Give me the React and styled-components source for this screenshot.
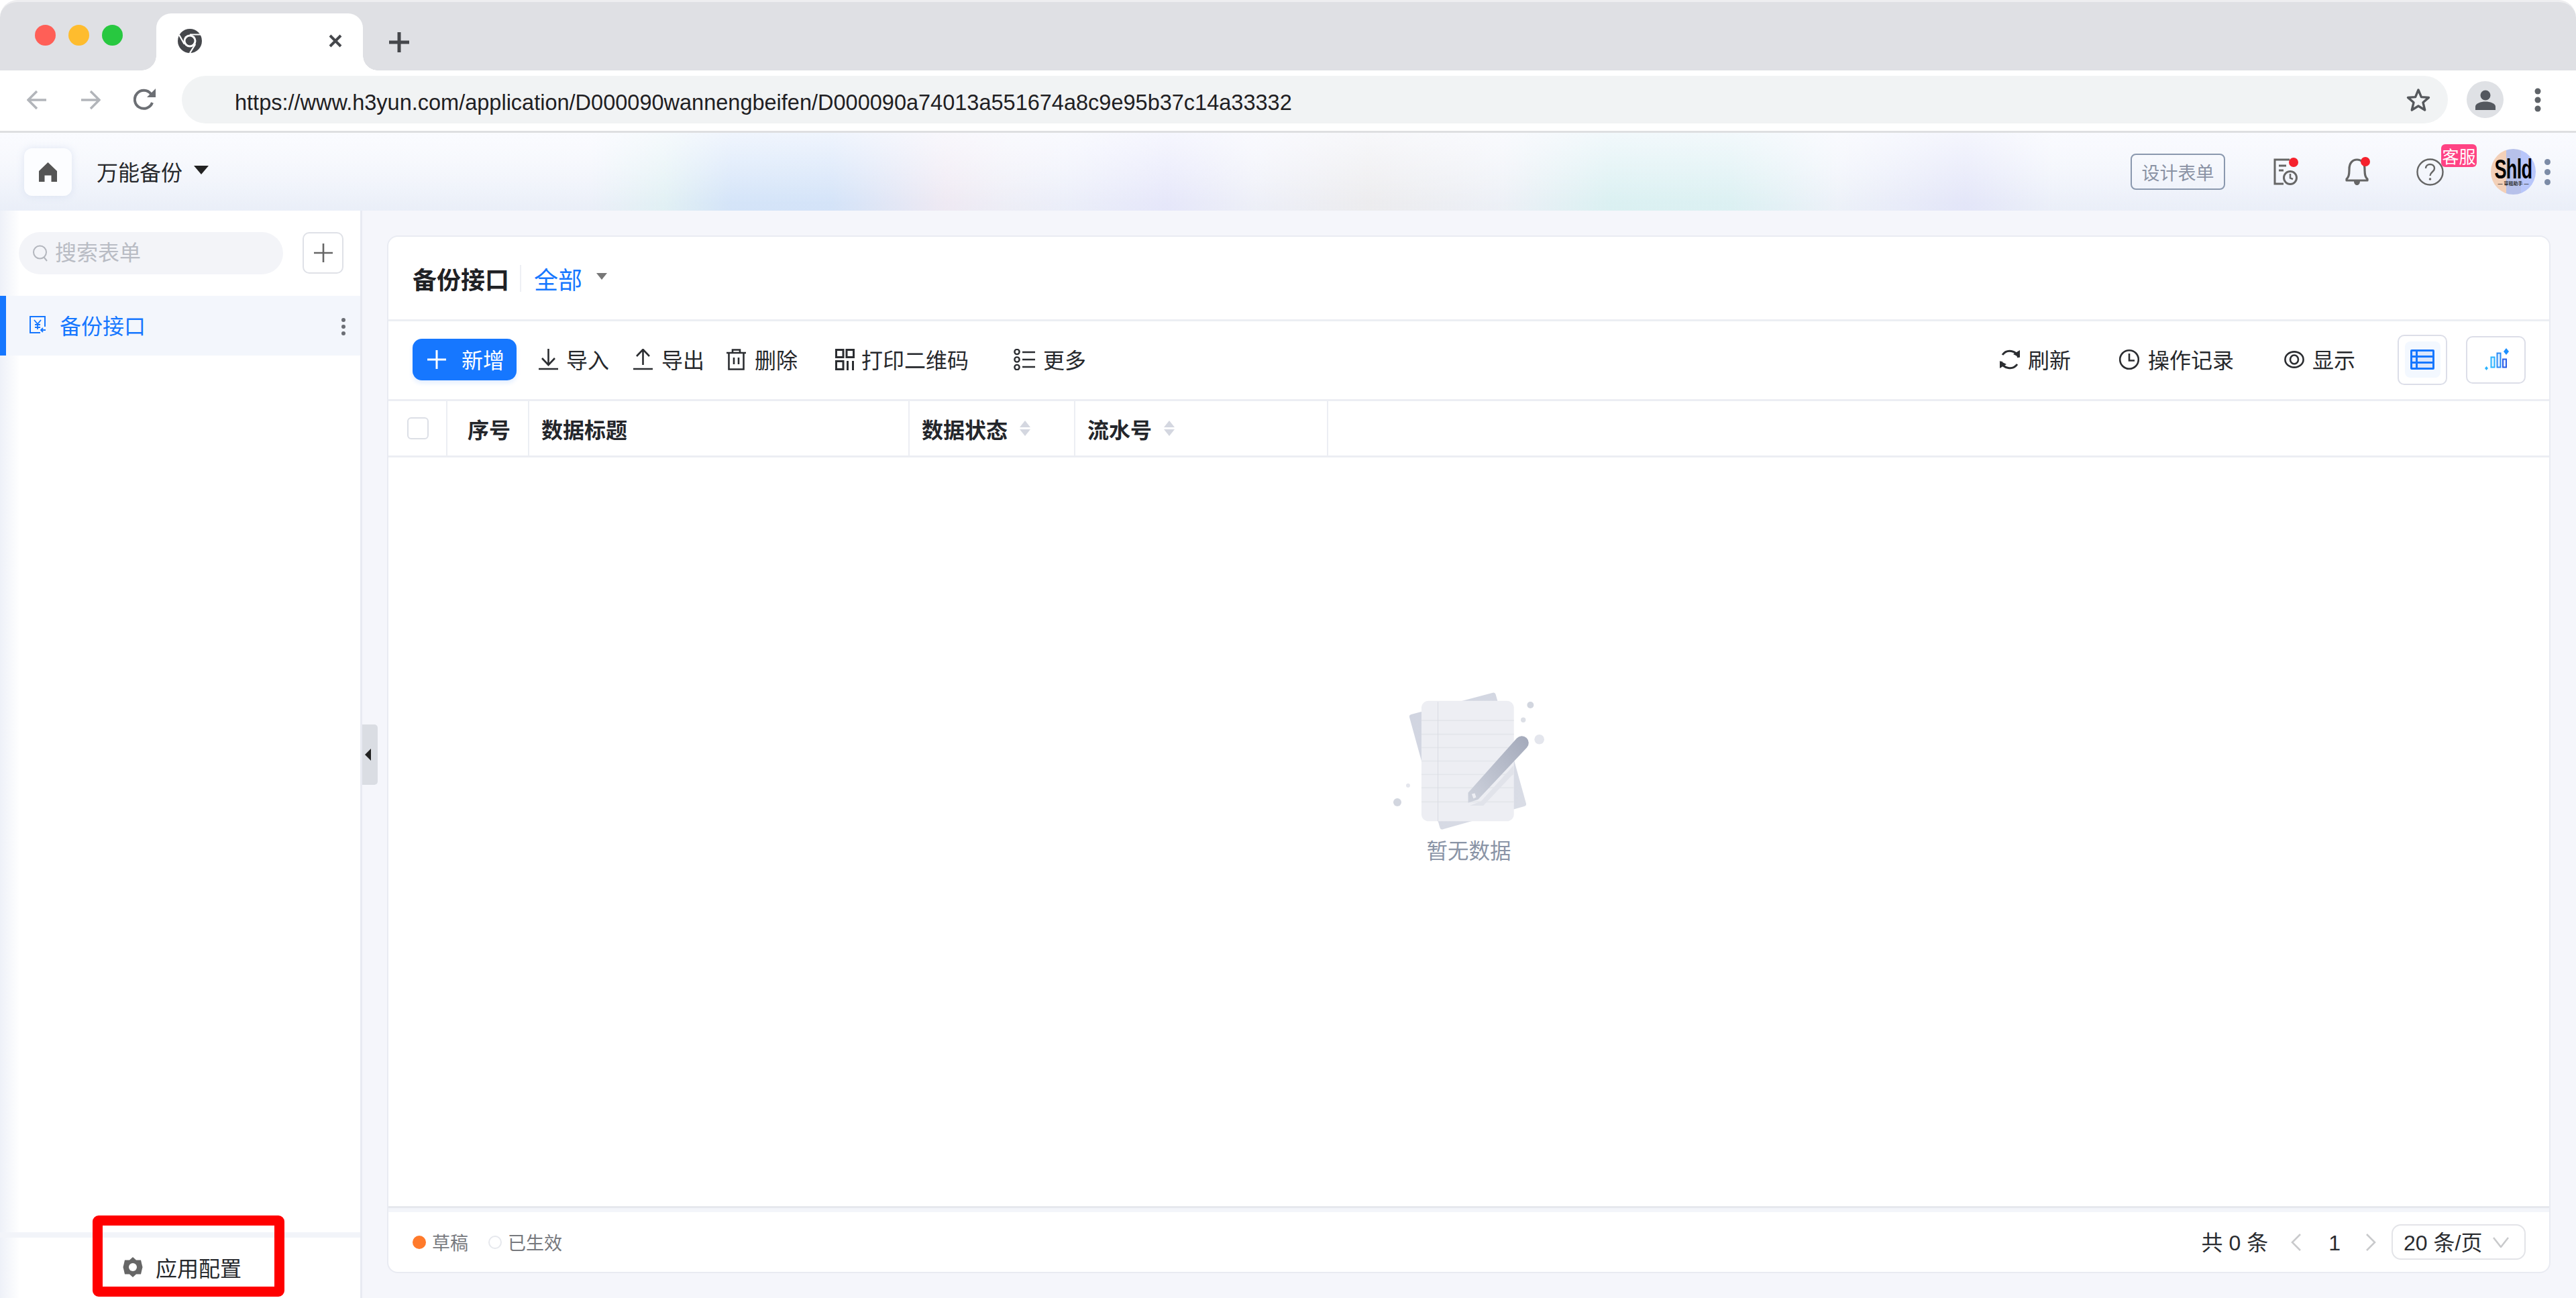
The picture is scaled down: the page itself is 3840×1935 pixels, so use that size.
import React from 'react';
import styled, { createGlobalStyle } from 'styled-components';

const Global = createGlobalStyle`
  html, body { margin: 0; padding: 0; background: #fff; }
  * { box-sizing: border-box; }
  body { font-family: "Liberation Sans", "Noto Sans CJK SC", sans-serif; color: #24262b; }
`;

const Win = styled.div`
  position: relative; width: 3840px; height: 1935px; overflow: hidden;
  display: flex; flex-direction: column; background: #fff;
`;
const TabStrip = styled.div`
  height: 105px; flex: none; background: #dfe0e4; border-top: 3px solid #eeeef0;
  border-radius: 26px 26px 0 0; display: flex; align-items: flex-end; padding-left: 233px;
`;
const Lights = styled.div`
  position: absolute; left: 52px; top: 37px; display: flex; gap: 19px;
`;
const Light = styled.span`
  width: 31px; height: 31px; border-radius: 50%; background: ${p => p.$c};
`;
const Tab = styled.div`
  position: relative; width: 308px; height: 85px; background: #fff; border-radius: 22px 22px 0 0;
  display: flex; align-items: center; justify-content: space-between; padding: 0 31px 4px 32px;
  &::before, &::after {
    content: ""; position: absolute; bottom: 0; width: 22px; height: 22px;
  }
  &::before { left: -22px; background: radial-gradient(circle at 0 0, transparent 21.5px, #fff 22px); }
  &::after { right: -22px; background: radial-gradient(circle at 100% 0, transparent 21.5px, #fff 22px); }
`;
const NewTab = styled.div`
  margin: 0 0 27px 39px; display: flex;
`;
const BrowserBar = styled.div`
  height: 93px; flex: none; background: #fff; border-bottom: 3px solid #dedfe1;
  display: flex; align-items: center; padding: 0 0 3px 40px;
`;
const NavIcon = styled.span`
  display: flex; margin-right: ${p => p.$mr}px;
`;
const Address = styled.div`
  width: 3378px; height: 71px; background: #f1f3f4; border-radius: 36px; margin-left: 38px;
  display: flex; align-items: center; justify-content: space-between; padding: 0 26px 0 79px;
`;
const Url = styled.span`
  font-size: 32.5px; color: #1f2023; white-space: nowrap; padding-top: 9px;
`;
const Person = styled.span`
  width: 55px; height: 55px; border-radius: 50%; background: #dfe1e5; margin-left: 28px;
  display: flex; align-items: center; justify-content: center; overflow: hidden;
`;
const ChromeDots = styled.span`
  margin-left: 46px; display: flex;
`;
const AppHeader = styled.header`
  height: 116px; flex: none; position: relative; display: flex; align-items: center; padding-left: 36px;
  background:
    linear-gradient(180deg, rgba(250,251,255,.72) 0%, rgba(250,251,255,.05) 90%),
    linear-gradient(90deg, rgba(255,255,255,0) 880px, rgba(214,240,238,.5) 990px, rgba(204,224,248,.8) 1090px, rgba(206,224,248,.85) 1240px, rgba(240,228,238,.6) 1410px, rgba(240,234,242,.4) 1500px, rgba(234,234,250,.3) 1590px, rgba(226,226,250,.7) 1740px, rgba(240,238,246,.4) 1870px, rgba(236,234,234,.75) 2040px, rgba(238,240,242,.4) 2240px, rgba(214,240,240,.85) 2400px, rgba(214,240,240,.8) 2580px, rgba(240,244,248,.3) 2740px, rgba(224,226,248,.8) 2930px, rgba(236,238,250,.15) 3060px),
    linear-gradient(180deg, #fafbfe 0%, #e9eef8 100%);
`;
const HomeBtn = styled.div`
  width: 71px; height: 71px; border-radius: 12px; background: #fcfdff;
  box-shadow: 0 0 12px rgba(170,185,220,.3); display: flex; align-items: center; justify-content: center;
`;
const AppName = styled.span`
  margin-left: 37px; font-size: 32px; color: #26282c; line-height: 1; padding-top: 3px;
`;
const Caret = styled.span`
  width: 0; height: 0; border-left: ${p => p.$w}px solid transparent; border-right: ${p => p.$w}px solid transparent;
  border-top: ${p => p.$h}px solid ${p => p.$c};
`;
const NameCaret = styled(Caret)` margin: 0 0 5px 17px; `;
const HeaderRight = styled.div`
  margin-left: auto; display: flex; align-items: center; padding-right: 38px;
`;
const DesignBtn = styled.div`
  width: 141px; height: 54px; border: 2px solid #8a98ae; border-radius: 8px;
  display: flex; align-items: center; justify-content: center; font-size: 27px; color: #8a92a4;
  margin: 0 72px 0 0;
`;
const HeadIcon = styled.span`
  position: relative; display: flex; margin-left: ${p => p.$ml}px;
`;
const RedDot = styled.i`
  position: absolute; right: ${p => p.$r}px; top: ${p => p.$t}px; width: 14px; height: 14px; border-radius: 50%; background: #f5222d;
`;
const Badge = styled.span`
  position: absolute; left: 37px; top: -21px; width: 53px; height: 34px; border-radius: 6px; background: #ff4384;
  color: #fff; font-size: 25px; display: flex; align-items: center; justify-content: center; white-space: nowrap;
`;
const Avatar = styled.div`
  width: 67px; height: 68px; margin-left: 70px; border-radius: 50%; overflow: hidden; flex: none;
  background: linear-gradient(90deg, #f3d0b8 0 34%, #b7c1ea 34% 67%, #b8c6fa 67%);
  display: flex; flex-direction: column; align-items: center; justify-content: center;
`;
const AvatarName = styled.span`
  font-size: 41px; line-height: 36px; font-weight: 700; color: #000; transform: scaleX(.66); letter-spacing: -1px;
`;
const AvatarSub = styled.span`
  font-size: 7px; line-height: 8px; color: #333; white-space: nowrap; font-weight: 700;
`;
const VDots = styled.span`
  display: flex; flex-direction: column; gap: 6px; margin-left: 13px;
`;
const VDot = styled.i`
  width: ${p => p.$s}px; height: ${p => p.$s}px; border-radius: 50%; background: ${p => p.$c};
`;
const BodyRow = styled.div`
  flex: 1; display: flex; min-height: 0; background: #f5f6fb; position: relative;
`;
const Sidebar = styled.aside`
  width: 540px; flex: none; background: linear-gradient(90deg, #eef1f8 0, #fff 30px); border-right: 3px solid #e8eaf2;
  display: flex; flex-direction: column; position: relative;
`;
const SearchRow = styled.div`
  display: flex; padding: 32px 0 0 28px; height: 127px; flex: none; align-items: flex-start;
`;
const Search = styled.div`
  width: 394px; height: 63px; border-radius: 32px; background: #f3f4f8; display: flex; align-items: center;
  padding-left: 21px; gap: 11px; font-size: 32px; color: #b9bcc4; line-height: 1; padding-bottom: 1px;
`;
const AddBtn = styled.div`
  width: 61px; height: 62px; margin-left: 29px; border: 2px solid #dfe1e7; border-radius: 10px; background: #fff;
  display: flex; align-items: center; justify-content: center;
`;
const NavItem = styled.div`
  height: 89px; flex: none; background: #f3f6fc; border-left: 9px solid #1677ff; display: flex; align-items: center;
  padding: 0 0 3px 34px; gap: 20px; font-size: 32px; color: #1677ff; position: relative;
`;
const ItemDots = styled.span`
  position: absolute; right: 22px; top: 33px; display: flex; flex-direction: column; gap: 4px;
`;
const SideSpacer = styled.div` flex: 1; `;
const SideLine = styled.div` height: 8px; flex: none; background: #f2f4f9; `;
const Config = styled.div`
  height: 90px; flex: none; display: flex; align-items: center; padding: 0 0 2px 183px; gap: 19px; font-size: 32px; color: #26282c;
`;
const Marker = styled.div`
  position: absolute; left: 138px; top: 1812px; width: 286px; height: 121px; border: 15px solid #f00; border-radius: 9px; pointer-events: none;
`;
const Collapse = styled.div`
  position: absolute; left: 540px; top: 766px; width: 23px; height: 90px; background: #dadde3; border-radius: 0 5px 5px 0;
  display: flex; align-items: center; justify-content: flex-start; padding-left: 4px;
`;
const CollapseArrow = styled.i`
  width: 0; height: 0; border-top: 9px solid transparent; border-bottom: 9px solid transparent; border-right: 9px solid #222;
`;
const Main = styled.main`
  flex: 1; padding: 37px 38px 37px 37px; display: flex; min-width: 0;
`;
const Card = styled.section`
  flex: 1; background: #fff; border: 2px solid #e9ebf2; border-radius: 16px; display: flex; flex-direction: column; overflow: hidden;
`;
const TitleRow = styled.div`
  height: 126px; flex: none; border-bottom: 3px solid #eceef3; display: flex; align-items: center; padding-left: 36px;
`;
const Title = styled.h1`
  margin: 0; font-size: 36px; font-weight: 700; color: #1f2125; line-height: 1; width: 162px;
  border-right: 2px solid #eef0f4; padding: 8px 0 0; height: 40px; display: flex; align-items: center; white-space: nowrap;
`;
const Scope = styled.span`
  font-size: 36px; line-height: 1; color: #1677ff; margin-left: 19px; padding-top: 8px;
`;
const ScopeCaret = styled(Caret)` margin: 0 0 6px 21px; `;
const ToolRow = styled.div`
  height: 119px; flex: none; border-bottom: 3px solid #eceef3; display: flex; align-items: center; padding: 0 35px 2px 36px;
`;
const Primary = styled.div`
  width: 155px; height: 62px; border-radius: 14px; background: #1677ff; color: #fff; font-size: 32px; line-height: 1;
  display: flex; align-items: center; padding-left: 22px; gap: 23px; box-shadow: 0 4px 6px rgba(22,119,255,.12); flex: none;
`;
const Label = styled.span` padding-top: 3px; `;
const ThLabel = styled.span` padding-top: 6px; `;
const Tool = styled.div`
  display: flex; align-items: center; gap: ${p => p.$gap || 13}px; font-size: 32px; line-height: 1; color: #26282c;
  margin-left: ${p => p.$ml}px; white-space: nowrap; flex: none;
`;
const ToolRight = styled.div` margin-left: auto; display: flex; align-items: center; `;
const ViewBtn = styled.div`
  width: ${p => p.$w}px; height: ${p => p.$h}px; margin-left: ${p => p.$ml}px; border: 2px solid #dcdee8; border-radius: 10px; flex: none;
  display: flex; align-items: center; justify-content: center; background: #fff;
`;
const ViewInner = styled.span`
  width: 53px; height: 54px; border-radius: 8px; background: #f3f8ff; display: flex; align-items: center; justify-content: center;
`;
const THead = styled.div`
  height: 84px; flex: none; border-bottom: 3px solid #eceef3; display: grid;
  grid-template-columns: 88px 122px 567px 247px 377px; padding-bottom: 0;
`;
const Th = styled.div`
  border-right: 2px solid #eceef3; display: flex; align-items: center; padding-left: ${p => p.$pl}px; gap: ${p => p.$gap || 0}px;
  font-size: 32px; font-weight: 700; color: #24262b; line-height: 1; white-space: nowrap;
`;
const Check = styled.span`
  width: 32px; height: 33px; border: 2px solid #dcdfe6; border-radius: 6px; background: #fff;
`;
const Sort = styled.span` display: flex; flex-direction: column; gap: 3px; `;
const SortUp = styled.i`
  width: 0; height: 0; border-left: 8px solid transparent; border-right: 8px solid transparent; border-bottom: 10px solid #d4d7e0;
`;
const SortDown = styled(SortUp)` transform: rotate(180deg); `;
const TBody = styled.div`
  flex: 1; display: flex; flex-direction: column; align-items: center; padding-top: 346px; min-height: 0;
`;
const EmptyArt = styled.svg` display: block; flex: none; `;
const EmptyText = styled.div`
  margin-top: 9px; font-size: 31.5px; line-height: 38px; color: #8a94a6;
`;
const Foot = styled.div`
  height: 98px; flex: none; border-top: 9px solid #f3f5fa; position: relative; display: flex; align-items: center; padding: 0 35px 0 36px;
  &::before { content: ""; position: absolute; left: 0; right: 0; top: -9px; height: 3px; background: #e6e8ed; }
`;
const Legend = styled.span`
  display: flex; align-items: center; gap: 9px; font-size: 27px; color: #77797e; margin-right: 30px; line-height: 1;
`;
const LegendText = styled.span` padding-top: 5px; `;
const LDot = styled.i`
  width: 20px; height: 20px; border-radius: 50%; background: ${p => p.$on ? '#ff7a2b' : '#fff'};
  border: ${p => p.$on ? 'none' : '2px solid #e6e8ed'};
`;
const Pager = styled.div`
  margin-left: auto; display: flex; align-items: center; font-size: 32px; color: #2a2c30; line-height: 1;
`;
const Total = styled.span` margin-right: 34px; padding-top: 3px; `;
const PageNum = styled.span` margin: 0 38px 0 41px; padding-top: 3px; `;
const SizeSel = styled.div`
  width: 200px; height: 53px; margin-left: 23px; border: 2px solid #e3e4e8; border-radius: 14px;
  display: flex; align-items: center; padding-left: 16px; gap: 16px; white-space: nowrap;
`;

const I = ({ w, h, vb, children, ...r }) => (
  <svg width={w} height={h} viewBox={vb || `0 0 ${w} ${h}`} fill="none" {...r}>{children}</svg>
);

const ChromeLogo = () => (
  <I w={36} h={36} vb="0 0 36 36">
    <circle cx="18" cy="18" r="18" fill="#45474b" />
    <circle cx="18" cy="18" r="9.5" fill="#fff" />
    <circle cx="18" cy="18" r="6.5" fill="#45474b" />
    <path d="M18 8.5H34M9.8 22.8L2 9M26.2 22.8L18 36" stroke="#fff" strokeWidth="2.2" />
  </I>
);

export default function App() {
  const arrow = '#b2b5ba';
  return (
    <Win>
      <Global />
      <TabStrip>
        <Lights>
          <Light $c="#ff5f57" /><Light $c="#febc2e" /><Light $c="#28c840" />
        </Lights>
        <Tab>
          <ChromeLogo />
          <I w={20} h={20}><path d="M2 2L18 18M18 2L2 18" stroke="#45474b" strokeWidth="4" /></I>
        </Tab>
        <NewTab>
          <I w={30} h={30}><path d="M15 0V30M0 15H30" stroke="#45474b" strokeWidth="5" /></I>
        </NewTab>
      </TabStrip>
      <BrowserBar>
        <NavIcon $mr={50}>
          <I w={30} h={30}><path d="M29 15H3M15 2L2 15L15 28" stroke={arrow} strokeWidth="3.5" /></I>
        </NavIcon>
        <NavIcon $mr={49}>
          <I w={30} h={30}><path d="M1 15H27M15 2L28 15L15 28" stroke={arrow} strokeWidth="3.5" /></I>
        </NavIcon>
        <NavIcon $mr={0}>
          <I w={34} h={34}>
            <path d="M28 21A13.5 13.5 0 1 1 26 8" stroke="#6c6f74" strokeWidth="4" />
            <path d="M20 13L33 13L33 0Z" fill="#6c6f74" />
          </I>
        </NavIcon>
        <Address>
          <Url>https://www.h3yun.com/application/D000090wannengbeifen/D000090a74013a551674a8c9e95b37c14a33332</Url>
          <I w={36} h={36}>
            <path d="M18 3L22.4 13.6L33.5 14.4L25 21.8L27.7 33L18 27L8.3 33L11 21.8L2.5 14.4L13.6 13.6Z" stroke="#55585c" strokeWidth="3.4" strokeLinejoin="round" />
          </I>
        </Address>
        <Person>
          <I w={32} h={32}>
            <circle cx="16" cy="9" r="7.5" fill="#54585f" />
            <path d="M1 31V26C1 21 9 18.5 16 18.5S31 21 31 26V31Z" fill="#54585f" />
          </I>
        </Person>
        <ChromeDots>
          <I w={10} h={36}>
            <circle cx="5" cy="5" r="4.5" fill="#5f6368" /><circle cx="5" cy="18" r="4.5" fill="#5f6368" /><circle cx="5" cy="31" r="4.5" fill="#5f6368" />
          </I>
        </ChromeDots>
      </BrowserBar>
      <AppHeader>
        <HomeBtn>
          <I w={27} h={29}>
            <path d="M13.5 0L27 13V29H18.5V19.5H8.5V29H0V13Z" fill="#555" />
          </I>
        </HomeBtn>
        <AppName>万能备份</AppName>
        <NameCaret $w={11} $h={13} $c="#222" />
        <HeaderRight>
          <DesignBtn>设计表单</DesignBtn>
          <HeadIcon $ml={0}>
            <I w={36} h={40}>
              <path d="M24 2H2V38H15" stroke="#666" strokeWidth="3" />
              <path d="M8 11H19M8 18H15" stroke="#666" strokeWidth="3" />
              <circle cx="25" cy="29" r="9.5" stroke="#666" strokeWidth="3" />
              <path d="M25 23V29.5L29 31" stroke="#666" strokeWidth="2.5" />
            </I>
            <RedDot $r={-1} $t={-1} />
          </HeadIcon>
          <HeadIcon $ml={70}>
            <I w={37} h={40}>
              <path d="M3 31C6 28 7 25 7 16C7 7 12 2 18.5 2S30 7 30 16C30 25 31 28 34 31V33H3Z" stroke="#666" strokeWidth="3.2" strokeLinejoin="round" />
              <path d="M14 34C14 42 23 42 23 34" fill="#666" />
            </I>
            <RedDot $r={-1} $t={-2} />
          </HeadIcon>
          <HeadIcon $ml={70}>
            <I w={41} h={41}>
              <circle cx="20.5" cy="20.5" r="19" stroke="#666" strokeWidth="2.4" />
              <path d="M14 15C14 7 27 7 27 15C27 20 21 20 20.5 26" stroke="#666" strokeWidth="2.4" />
              <circle cx="20.5" cy="31" r="1.8" fill="#666" />
            </I>
            <Badge>客服</Badge>
          </HeadIcon>
          <Avatar>
            <AvatarName>Shld</AvatarName>
            <AvatarSub>— 审租助手 —</AvatarSub>
          </Avatar>
          <VDots>
            <VDot $s={9} $c="#7c8ba6" /><VDot $s={9} $c="#7c8ba6" /><VDot $s={9} $c="#7c8ba6" />
          </VDots>
        </HeaderRight>
      </AppHeader>
      <BodyRow>
        <Sidebar>
          <SearchRow>
            <Search>
              <I w={22} h={25}>
                <circle cx="10.5" cy="11" r="9.5" stroke="#b3b6bd" strokeWidth="2" />
                <path d="M16.5 18.5L21 24" stroke="#b3b6bd" strokeWidth="2" />
              </I>
              搜索表单
            </Search>
            <AddBtn>
              <I w={28} h={28}><path d="M14 0V28M0 14H28" stroke="#666" strokeWidth="2.6" /></I>
            </AddBtn>
          </SearchRow>
          <NavItem>
            <I w={26} h={26}>
              <path d="M17 25H2V1H24V16" stroke="#1677ff" strokeWidth="2" />
              <path d="M8 6L13 12L18 6M13 12V20M9 13H17M9 17H17M25 21H18M21 18L18 21L21 24" stroke="#1677ff" strokeWidth="1.8" />
            </I>
            备份接口
            <ItemDots>
              <VDot $s={6} $c="#6b6e75" /><VDot $s={6} $c="#6b6e75" /><VDot $s={6} $c="#6b6e75" />
            </ItemDots>
          </NavItem>
          <SideSpacer />
          <SideLine />
          <Config>
            <I w={30} h={32}>
              <path d="M15 1L20 5.5L27 5.5L28.5 12L29.5 16L28.5 20L27 26.5L20 26.5L15 31L10 26.5L3 26.5L1.5 20L.5 16L1.5 12L3 5.5L10 5.5Z" fill="#666" />
              <circle cx="15" cy="16" r="6" fill="#fff" />
            </I>
            应用配置
          </Config>
        </Sidebar>
        <Collapse><CollapseArrow /></Collapse>
        <Main>
          <Card>
            <TitleRow>
              <Title>备份接口</Title>
              <Scope>全部</Scope>
              <ScopeCaret $w={8} $h={10} $c="#777" />
            </TitleRow>
            <ToolRow>
              <Primary>
                <I w={28} h={28}><path d="M14 0V28M0 14H28" stroke="#fff" strokeWidth="3" /></I>
                <Label>新增</Label>
              </Primary>
              <Tool $ml={33} $gap={12}>
                <I w={29} h={32}><path d="M14.5 0V24M5 14L14.5 24L24 14M0 30H29" stroke="#2b2d31" strokeWidth="2.6" /></I>
                <Label>导入</Label>
              </Tool>
              <Tool $ml={36}>
                <I w={29} h={32}><path d="M14.5 24V1M5 11L14.5 1L24 11M0 30H29" stroke="#2b2d31" strokeWidth="2.6" /></I>
                <Label>导出</Label>
              </Tool>
              <Tool $ml={33}>
                <I w={29} h={32}>
                  <path d="M0 6H29M9 5V1.5H20V5M3.5 6V30.5H25.5V6M11 13V23M18 13V23" stroke="#2b2d31" strokeWidth="2.6" />
                </I>
                <Label>删除</Label>
              </Tool>
              <Tool $ml={56} $gap={10}>
                <I w={29} h={32}>
                  <rect x="1.5" y="1.5" width="10.5" height="11" stroke="#2b2d31" strokeWidth="3" />
                  <rect x="17" y="1.5" width="10.5" height="11" stroke="#2b2d31" strokeWidth="3" />
                  <rect x="1.5" y="18.5" width="10.5" height="12" stroke="#2b2d31" strokeWidth="3" />
                  <path d="M18.5 18V32M26.5 18V32" stroke="#2b2d31" strokeWidth="3" />
                </I>
                <Label>打印二维码</Label>
              </Tool>
              <Tool $ml={67} $gap={12}>
                <I w={32} h={32}>
                  <circle cx="5" cy="4.5" r="3.6" stroke="#2b2d31" strokeWidth="2.4" />
                  <circle cx="5" cy="16" r="3.6" stroke="#2b2d31" strokeWidth="2.4" />
                  <circle cx="5" cy="27.5" r="3.6" stroke="#2b2d31" strokeWidth="2.4" />
                  <path d="M13 5H32M13 16H32M13 27H32" stroke="#2b2d31" strokeWidth="2.6" />
                </I>
                <Label>更多</Label>
              </Tool>
              <ToolRight>
                <Tool $ml={0} $gap={11}>
                  <I w={32} h={32}>
                    <path d="M3 19A13.5 13.5 0 0 0 27 23" stroke="#2b2d31" strokeWidth="3" />
                    <path d="M29 13A13.5 13.5 0 0 0 5 9" stroke="#2b2d31" strokeWidth="3" />
                    <path d="M1 30V19L11 24Z" fill="#2b2d31" transform="translate(0 -1)" />
                    <path d="M31 2V13L21 8Z" fill="#2b2d31" />
                  </I>
                  <Label>刷新</Label>
                </Tool>
                <Tool $ml={72}>
                  <I w={30} h={32}>
                    <circle cx="15" cy="16" r="13.8" stroke="#2b2d31" strokeWidth="2.6" />
                    <path d="M15 7V17.5H23" stroke="#2b2d31" strokeWidth="2.6" />
                  </I>
                  <Label>操作记录</Label>
                </Tool>
                <Tool $ml={75} $gap={12}>
                  <I w={30} h={26}>
                    <ellipse cx="15" cy="13" rx="13.6" ry="11.6" stroke="#2b2d31" strokeWidth="2.6" />
                    <ellipse cx="15" cy="13" rx="6" ry="6.5" stroke="#2b2d31" strokeWidth="2.6" />
                  </I>
                  <Label>显示</Label>
                </Tool>
                <ViewBtn $w={74} $h={75} $ml={63}>
                  <ViewInner>
                    <I w={36} h={30}>
                      <rect width="36" height="30" rx="2" fill="#1677ff" />
                      <path d="M11 3H33V9H11ZM11 12H33V18H11ZM11 21H33V27H11Z" fill="#dbe6fb" />
                      <path d="M3 3H8V9H3ZM3 12H8V18H3ZM3 21H8V27H3Z" fill="#dbe6fb" />
                    </I>
                  </ViewInner>
                </ViewBtn>
                <ViewBtn $w={89} $h={71} $ml={28}>
                  <I w={40} h={34}>
                    <rect x="12.5" y="13.5" width="5" height="15" fill="#e6f5ff" stroke="#29b3ff" strokeWidth="2" />
                    <rect x="21.5" y="7.5" width="5" height="21" fill="#e6f1ff" stroke="#2a8bf5" strokeWidth="2" />
                    <rect x="30" y="16.5" width="5" height="12" fill="#e6ebff" stroke="#2a5fe8" strokeWidth="2" />
                    <path d="M35 0L39 5L35 10L31 5Z" fill="#1e90ff" />
                    <path d="M5.5 27L8 30L5.5 33L3 30Z" fill="#29b3ff" />
                  </I>
                </ViewBtn>
              </ToolRight>
            </ToolRow>
            <THead>
              <Th $pl={28}><Check /></Th>
              <Th $pl={30}><ThLabel>序号</ThLabel></Th>
              <Th $pl={18}><ThLabel>数据标题</ThLabel></Th>
              <Th $pl={18} $gap={18}>
                <ThLabel>数据状态</ThLabel>
                <Sort><SortUp /><SortDown /></Sort>
              </Th>
              <Th $pl={18} $gap={18}>
                <ThLabel>流水号</ThLabel>
                <Sort><SortUp /><SortDown /></Sort>
              </Th>
            </THead>
            <TBody>
              <EmptyArt width="237" height="213" viewBox="340 140 710 640">
                <defs>
                  <linearGradient id="pg" x1="0" y1="0" x2="1" y2="1">
                    <stop offset="0" stopColor="#d0d4e0" /><stop offset="1" stopColor="#dadde6" />
                  </linearGradient>
                  <linearGradient id="pen" x1="1" y1="0" x2="0" y2="1">
                    <stop offset="0" stopColor="#a3a9ba" /><stop offset="1" stopColor="#cfd3dd" />
                  </linearGradient>
                </defs>
                <path d="M440 262L805 165L941 652L576 755Z" fill="url(#pg)" stroke="url(#pg)" strokeWidth="22" strokeLinejoin="round" />
                <rect x="483" y="190" width="414" height="540" rx="32" fill="#edeef3" />
                <path d="M483 278H897M483 340H897M483 400H897M483 460H897M483 520H897M483 580H897M483 643H897" stroke="#e3e5ea" strokeWidth="5" />
                <path d="M557 195V730" stroke="#d9dbe3" strokeWidth="3" />
                <path d="M895 480L750 640L700 660L760 660L897 515Z" fill="#e1e3ea" />
                <path d="M692 602L910 358A30 30 0 0 1 955 400L737 632L692 647Z" fill="url(#pen)" />
                <path d="M708 608L722 604L728 622L716 628Z" fill="#edeef3" />
                <circle cx="971" cy="209" r="15" fill="#d2d6df" />
                <circle cx="939" cy="276" r="11" fill="#dcdfe6" />
                <circle cx="1011" cy="363" r="22" fill="#e4e6ed" />
                <circle cx="423" cy="570" r="9" fill="#e4e6ed" />
                <circle cx="375" cy="645" r="18" fill="#d2d6df" />
              </EmptyArt>
              <EmptyText>暂无数据</EmptyText>
            </TBody>
            <Foot>
              <Legend><LDot $on /><LegendText>草稿</LegendText></Legend>
              <Legend><LDot /><LegendText>已生效</LegendText></Legend>
              <Pager>
                <Total>共 0 条</Total>
                <I w={15} h={26}><path d="M14 1L2 13L14 25" stroke="#c9cacc" strokeWidth="2.6" /></I>
                <PageNum>1</PageNum>
                <I w={15} h={26}><path d="M1 1L13 13L1 25" stroke="#c9cacc" strokeWidth="2.6" /></I>
                <SizeSel>
                  <Label>20 条/页</Label>
                  <I w={24} h={16}><path d="M1 1L12 15L23 1" stroke="#c9cacc" strokeWidth="2.6" /></I>
                </SizeSel>
              </Pager>
            </Foot>
          </Card>
        </Main>
      </BodyRow>
      <Marker />
    </Win>
  );
}
